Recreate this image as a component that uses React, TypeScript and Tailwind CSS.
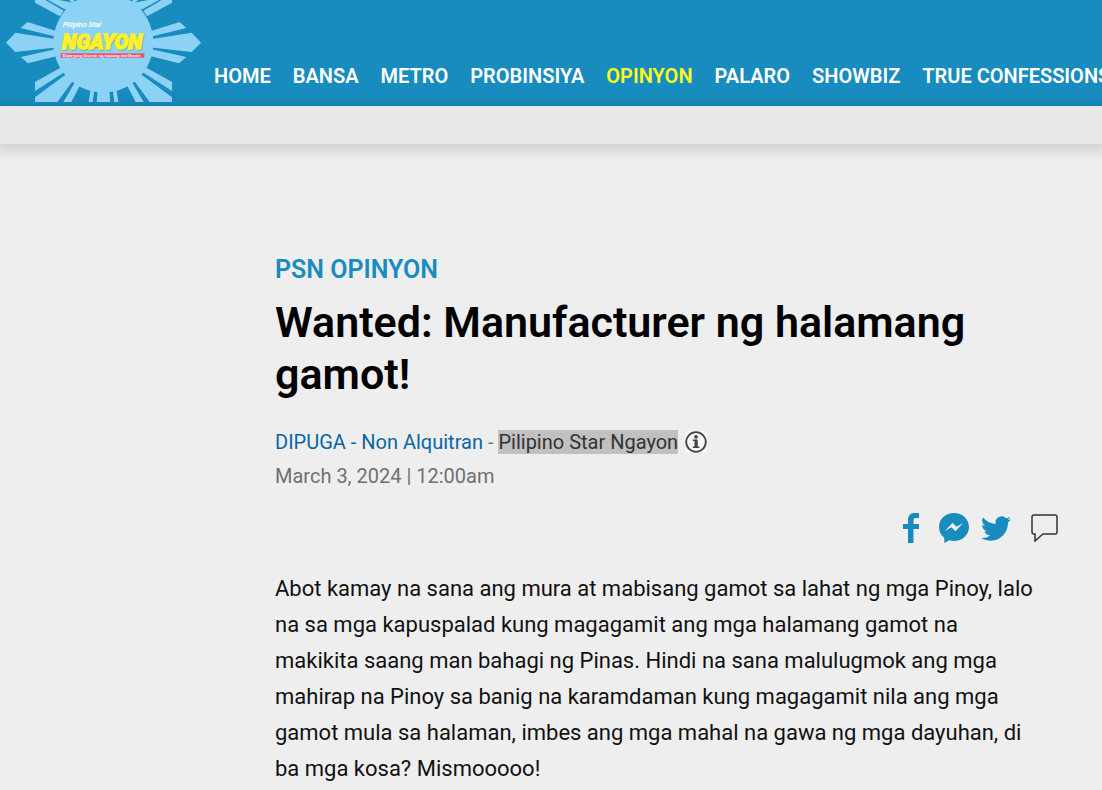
import clsx from "clsx";

const navItems = ["HOME", "BANSA", "METRO", "PROBINSIYA", "OPINYON", "PALARO", "SHOWBIZ", "TRUE CONFESSIONS"];

// Left half of the sun's rays, the right half is mirrored
const rays = [
  "18,128 46,98 160,116 180,118 180,143 160,143 46,156",
  "82,66 166,92 180,98 180,110 160,108 62,84",
  "62,171 160,149 180,146 180,166 84,190",
  "105,0 136,0 191,32 180,49 105,8",
  "144,0 176,0 230,10 215,30 194,28",
  "206,0 221,0 240,20 217,8",
  "105,246 180,204 192,200 200,212 105,273",
  "105,292 191,228 230,210 240,220 216,246 172,306 105,306",
  "190,306 223,250 236,230 252,232 237,262 214,306",
  "266,306 271,274 274,262 284,262 282,277 278,306",
];

function Logo() {
  return (
    <svg viewBox="0 0 630 306" className="w-[210px] shrink-0" role="img" aria-label="Pilipino Star Ngayon">
      <g fill="#8bd2f5">
        <circle cx="310" cy="128" r="150" />
        {rays.map((points) => <polygon key={points} points={points} />)}
        <g transform="translate(621 0) scale(-1 1)">
          {rays.map((points) => <polygon key={points} points={points} />)}
        </g>
        <polygon points="294,262 328,262 330,306 290,306" />
      </g>
      <text x="188" y="80" fontSize="20" fontWeight="700" fontStyle="italic" fill="#fff" fontFamily="Liberation Sans, sans-serif">Pilipino Star</text>
      <g fontSize="62" fontWeight="900" fontStyle="italic" strokeWidth="4" fontFamily="Roboto, sans-serif">
        <text x="190" y="149" fill="#7fae90" stroke="#7fae90">NGAYON</text>
        <text x="187" y="147" fill="#fff22d" stroke="#fff22d">NGAYON</text>
      </g>
      <rect x="182" y="160" width="251" height="13" fill="#f0506e" />
      <text x="188" y="170" fontSize="12" fontWeight="700" fill="#fff" fontFamily="Liberation Sans, sans-serif">Diyaryong disente ng masang intelihente</text>
    </svg>
  );
}

function InfoIcon() {
  return (
    <svg viewBox="0 0 22 22" className="size-[22px]" aria-hidden="true">
      <rect width="22" height="22" fill="#f7f7f7" />
      <circle cx="11" cy="11" r="9.8" fill="none" stroke="#444" strokeWidth="1.8" />
      <circle cx="11" cy="5.8" r="1.9" fill="#444" />
      <path d="M7.800 8.600h4.900v6.900h1.600V17H7.800v-1.500h1.700v-5.400H7.800z" fill="#444" />
    </svg>
  );
}

function ShareBar() {
  return (
    <div className="flex items-center justify-end pr-11 text-[#188cbf]">
      <a href="#facebook" aria-label="Facebook" className="mr-5">
        <svg viewBox="0 0 16 30" className="h-[30px] w-4" fill="currentColor">
          <path d="M16 0v5h-3c-2 0-2.500.9-2.500 2.700V11H16v5h-5.500v14H5V16H0v-5h5V7C5 2.300 7.600 0 11.800 0z" />
        </svg>
      </a>
      <a href="#messenger" aria-label="Messenger" className="mr-3">
        <svg viewBox="0 0 30 30" className="size-[30px]" fill="currentColor">
          <path fillRule="evenodd" d="M15 0C6.600 0 0 6.100 0 14c0 4.500 2 8.300 5.300 10.800V30l5.100-2.800c1.400.5 3 .8 4.600.8 8.400 0 15-6.200 15-14S23.400 0 15 0zM6 18l7.500-8.200 4 4L24 10l-7.500 8.200-4-4z" />
        </svg>
      </a>
      <a href="#twitter" aria-label="Twitter" className="mr-5">
        <svg viewBox="0 2 24 20" className="h-[25px] w-[30px]" fill="currentColor">
          <path d="M23.950 4.570a10 10 0 0 1-2.820.77 4.960 4.960 0 0 0 2.160-2.720c-.95.550-2 .950-3.130 1.180a4.920 4.920 0 0 0-8.380 4.480C7.690 8.100 4.070 6.130 1.640 3.160a4.920 4.920 0 0 0 1.520 6.570 4.900 4.900 0 0 1-2.230-.61v.06a4.920 4.920 0 0 0 3.950 4.830 5 5 0 0 1-2.210.08 4.940 4.940 0 0 0 4.600 3.420A9.870 9.870 0 0 1 0 19.540a13.990 13.990 0 0 0 7.550 2.210c9.050 0 14-7.500 14-13.980 0-.21 0-.420-.02-.630a9.940 9.940 0 0 0 2.460-2.550z" />
        </svg>
      </a>
      <a href="#comments" aria-label="Comments">
        <svg viewBox="0 0 27 28" className="h-7 w-[27px]" fill="none" stroke="#333" strokeWidth="1.500">
          <path d="M3 1h21a2 2 0 0 1 2 2v15a2 2 0 0 1-2 2H12l-8 7v-7H3a2 2 0 0 1-2-2V3a2 2 0 0 1 2-2z" />
        </svg>
      </a>
    </div>
  );
}

export default function App() {
  return (
    <div className="min-h-screen overflow-hidden bg-[#eee] font-[Roboto,sans-serif]">
      <header>
        <div className="flex h-[106px] items-start overflow-hidden bg-[#188cbf]">
          <Logo />
          <nav className="ml-1 flex gap-[22px] pt-16 text-xl leading-6 font-semibold whitespace-nowrap">
            {navItems.map((item) => (
              <a key={item} href="#" className={clsx(item === "OPINYON" ? "text-[#ffff19]" : "text-white")}>
                {item}
              </a>
            ))}
          </nav>
        </div>
        <div className="h-[38px] bg-[#e8e8e8] shadow-[0_3px_12px_4px_rgba(0,0,0,0.13)]" />
      </header>

      <main className="pt-28 pl-[275px]">
        <h2 className="text-[25px] leading-7 font-semibold text-[#188cbf]">PSN OPINYON</h2>
        <h1 className="mt-3 max-w-[765px] text-[43px] leading-[52px] font-semibold text-black">
          Wanted: Manufacturer ng halamang gamot!
        </h1>
        <div className="mt-[30px] flex items-center text-xl leading-6 text-[#777]">
          <a href="#author" className="text-[#0b66a3]">DIPUGA - Non Alquitran</a>
          <span className="whitespace-pre"> - </span>
          <span className="mr-[7px] bg-[#c0c0c0] text-[#333]">Pilipino Star Ngayon</span>
          <InfoIcon />
        </div>
        <p className="mt-2.5 text-xl leading-6 text-[#707070]">March 3, 2024 | 12:00am</p>
        <div className="mt-[25px]">
          <ShareBar />
        </div>
        <p className="mt-7 max-w-[765px] text-[22px] leading-9 text-[#111]">
          Abot kamay na sana ang mura at mabisang gamot sa lahat ng mga Pinoy, lalo na sa mga kapuspalad kung
          magagamit ang mga halamang gamot na makikita saang man bahagi ng Pinas. Hindi na sana malulugmok ang mga
          mahirap na Pinoy sa banig na karamdaman kung magagamit nila ang mga gamot mula sa halaman, imbes ang mga
          mahal na gawa ng mga dayuhan, di ba mga kosa? Mismooooo!
        </p>
      </main>
    </div>
  );
}
